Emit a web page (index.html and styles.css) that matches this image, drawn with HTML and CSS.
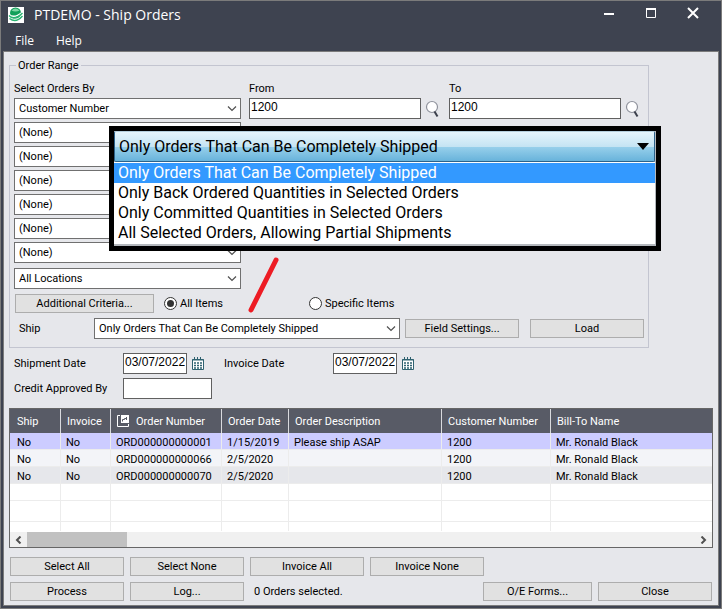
FILE: index.html
```html
<!DOCTYPE html>
<html lang="en">
<head>
    <meta charset="UTF-8">
    <meta name="viewport" content="width=device-width, initial-scale=1.0">
    <title>PTDEMO - Ship Orders</title>
    <link rel="stylesheet" href="styles.css">
</head>
<body>
    <div class="window">
        <header class="titlebar">
            <svg class="app-icon" width="16" height="16" viewBox="0 0 16 16">
                <rect width="16" height="16" fill="#fff"/>
                <circle cx="7.5" cy="6" r="5.5" fill="#12a05a"/>
                <path d="M3.5 3.5Q7.5 -.5 11.5 3.5Q7.5 5.5 3.5 3.5Z" fill="#7fd6a6"/>
                <path d="M1 7.5Q6 12 14 5.5" fill="none" stroke="#fff" stroke-width="1.4"/>
                <path d="M1 8.5Q6 14.5 14.5 6" fill="none" stroke="#2bb673" stroke-width="1.4"/>
                <path d="M1.5 11.5Q8 16.5 14.5 9" fill="none" stroke="#2bb673" stroke-width="1.4"/>
            </svg>
            <h1>PTDEMO - Ship Orders</h1>
            <div class="window-controls">
                <button type="button" aria-label="Minimize">
                    <svg width="12" height="12"><path d="M1 7H11" stroke="#fff" stroke-width="2"/></svg>
                </button>
                <button type="button" aria-label="Maximize">
                    <svg width="12" height="12"><path d="M1.5 1.5H10.5V10.5H1.5Z" fill="none" stroke="#fff"/><path d="M1 2H11" stroke="#fff" stroke-width="2"/></svg>
                </button>
                <button type="button" aria-label="Close window">
                    <svg width="12" height="12"><path d="M1 1L11 11M11 1L1 11" stroke="#fff" stroke-width="2"/></svg>
                </button>
            </div>
        </header>
        <nav class="menu">
            <a href="#">File</a>
            <a href="#">Help</a>
        </nav>

        <main class="content">
            <fieldset class="range">
                <legend>Order Range</legend>
                <div class="criteria">
                    <div class="select-col">
                        <label for="orderBy">Select Orders By</label>
                        <select id="orderBy"><option>Customer Number</option></select>
                        <select aria-label="Order by 2"><option>(None)</option></select>
                        <select aria-label="Order by 3"><option>(None)</option></select>
                        <select aria-label="Order by 4"><option>(None)</option></select>
                        <select aria-label="Order by 5"><option>(None)</option></select>
                        <select aria-label="Order by 6"><option>(None)</option></select>
                        <select aria-label="Order by 7"><option>(None)</option></select>
                        <select class="locations" aria-label="Locations"><option>All Locations</option></select>
                    </div>
                    <div class="value-col">
                        <label for="from">From</label>
                        <div class="finder">
                            <input type="text" id="from" value="1200">
                            <button type="button" class="icon-btn" aria-label="Find from">
                                <svg width="16" height="18" viewBox="0 0 16 18"><circle cx="7" cy="7" r="5.5" fill="#fff" stroke="#8f929c" stroke-width="1.2"/><path d="M9.5 11.5L12.5 16.5" stroke="#3c404c" stroke-width="2"/></svg>
                            </button>
                        </div>
                    </div>
                    <div class="value-col">
                        <label for="to">To</label>
                        <div class="finder">
                            <input type="text" id="to" value="1200">
                            <button type="button" class="icon-btn" aria-label="Find to">
                                <svg width="16" height="18" viewBox="0 0 16 18"><circle cx="7" cy="7" r="5.5" fill="#fff" stroke="#8f929c" stroke-width="1.2"/><path d="M9.5 11.5L12.5 16.5" stroke="#3c404c" stroke-width="2"/></svg>
                            </button>
                        </div>
                    </div>
                </div>
                <div class="items-row">
                    <button type="button" class="btn criteria-btn">Additional Criteria...</button>
                    <label class="radio"><input type="radio" name="items" checked>All Items</label>
                    <label class="radio"><input type="radio" name="items">Specific Items</label>
                </div>
                <div class="ship-row">
                    <label for="ship">Ship</label>
                    <select id="ship"><option>Only Orders That Can Be Completely Shipped</option></select>
                    <button type="button" class="btn">Field Settings...</button>
                    <button type="button" class="btn load-btn">Load</button>
                </div>

                <div class="callout">
                    <button type="button" class="callout-value">Only Orders That Can Be Completely Shipped
                        <svg width="12" height="7"><path d="M0 0H12L6 7Z" fill="#000"/></svg>
                    </button>
                    <ul>
                        <li class="active">Only Orders That Can Be Completely Shipped</li>
                        <li>Only Back Ordered Quantities in Selected Orders</li>
                        <li>Only Committed Quantities in Selected Orders</li>
                        <li>All Selected Orders, Allowing Partial Shipments</li>
                    </ul>
                </div>
                <svg class="pointer" width="32" height="56"><path d="M28 3L3 53" stroke="#ed1c24" stroke-width="5" stroke-linecap="round"/></svg>
            </fieldset>

            <div class="dates">
                <label for="shipDate">Shipment Date</label>
                <div class="date-field">
                    <input type="text" id="shipDate" value="03/07/2022">
                    <button type="button" class="icon-btn" aria-label="Pick shipment date">
                        <svg width="12" height="13" viewBox="0 0 12 13"><path d="M.5 2.5H11.5V12.5H.5Z" fill="#fff" stroke="#2f6270"/><path d="M0 3H12M2.5 0V3M5.5 0V3M8.5 0V3" stroke="#2f6270"/><path d="M2 6H10M2 8.5H10M2 11H10" stroke="#2f6270" stroke-width="1.5" stroke-dasharray="2 1"/></svg>
                    </button>
                </div>
                <label for="invoiceDate">Invoice Date</label>
                <div class="date-field">
                    <input type="text" id="invoiceDate" value="03/07/2022">
                    <button type="button" class="icon-btn" aria-label="Pick invoice date">
                        <svg width="12" height="13" viewBox="0 0 12 13"><path d="M.5 2.5H11.5V12.5H.5Z" fill="#fff" stroke="#2f6270"/><path d="M0 3H12M2.5 0V3M5.5 0V3M8.5 0V3" stroke="#2f6270"/><path d="M2 6H10M2 8.5H10M2 11H10" stroke="#2f6270" stroke-width="1.5" stroke-dasharray="2 1"/></svg>
                    </button>
                </div>
                <label for="approvedBy">Credit Approved By</label>
                <input type="text" id="approvedBy" class="approved">
            </div>

            <div class="grid">
                <table>
                    <colgroup>
                        <col class="c-ship"><col class="c-invoice"><col class="c-number"><col class="c-date"><col class="c-desc"><col class="c-customer"><col>
                    </colgroup>
                    <thead>
                        <tr>
                            <th>Ship</th>
                            <th>Invoice</th>
                            <th><svg width="12" height="12" viewBox="0 0 12 12"><path d="M3 .5H.5V11.5H11.5V9" fill="none" stroke="#fff"/><path d="M4 0H12V8H4Z" fill="#fff"/><path d="M5.5 6.5V4.5H7.5V3.5H9.5M9.5 2V5" fill="none" stroke="#585b66"/></svg>Order Number</th>
                            <th>Order Date</th>
                            <th>Order Description</th>
                            <th>Customer Number</th>
                            <th>Bill-To Name</th>
                        </tr>
                    </thead>
                    <tbody>
                        <tr class="selected"><td>No</td><td>No</td><td>ORD000000000001</td><td>1/15/2019</td><td>Please ship ASAP</td><td>1200</td><td>Mr. Ronald Black</td></tr>
                        <tr class="light"><td>No</td><td>No</td><td>ORD000000000066</td><td>2/5/2020</td><td></td><td>1200</td><td>Mr. Ronald Black</td></tr>
                        <tr class="shaded"><td>No</td><td>No</td><td>ORD000000000070</td><td>2/5/2020</td><td></td><td>1200</td><td>Mr. Ronald Black</td></tr>
                        <tr><td></td><td></td><td></td><td></td><td></td><td></td><td></td></tr>
                        <tr class="tall"><td></td><td></td><td></td><td></td><td></td><td></td><td></td></tr>
                        <tr class="short"><td></td><td></td><td></td><td></td><td></td><td></td><td></td></tr>
                    </tbody>
                </table>
                <div class="scrollbar">
                    <button type="button" aria-label="Scroll left"><svg width="7" height="8"><path d="M5.5 .5L2 4L5.5 7.5" fill="none" stroke="#505050" stroke-width="2"/></svg></button>
                    <div class="thumb"></div>
                    <button type="button" aria-label="Scroll right"><svg width="7" height="8"><path d="M1.5 .5L5 4L1.5 7.5" fill="none" stroke="#505050" stroke-width="2"/></svg></button>
                </div>
            </div>

            <div class="actions">
                <button type="button" class="btn">Select All</button>
                <button type="button" class="btn">Select None</button>
                <button type="button" class="btn">Invoice All</button>
                <button type="button" class="btn">Invoice None</button>
            </div>
            <div class="actions">
                <button type="button" class="btn">Process</button>
                <button type="button" class="btn">Log...</button>
                <span class="status">0 Orders selected.</span>
                <button type="button" class="btn forms-btn">O/E Forms...</button>
                <button type="button" class="btn">Close</button>
            </div>
        </main>
    </div>
</body>
</html>
```

FILE: styles.css
```css
* {
    box-sizing: border-box;
}
body {
    margin: 0;
    font-family: Roboto, "Liberation Sans", Arial, sans-serif;
    font-size: 11px;
    line-height: 13px;
    color: #000;
}
button, input, select {
    font: inherit;
    color: inherit;
    margin: 0;
}
svg {
    display: block;
    flex-shrink: 0;
}

/* window frame */
.window {
    display: flex;
    flex-direction: column;
    min-height: 100vh;
    padding: 0 2px 2px;
    border: 1px solid #7b7b7b;
    background-color: #3e4350;
}
.titlebar {
    display: flex;
    align-items: center;
    height: 28px;
    padding-left: 5px;
    color: #fff;
}
.titlebar h1 {
    margin: 0 0 0 10px;
    font-family: "Open Sans", "Noto Sans", sans-serif;
    font-size: 14px;
    font-weight: normal;
    line-height: 20px;
}
.window-controls {
    display: flex;
    margin-left: auto;
    padding-right: 5px;
}
.window-controls button {
    display: flex;
    align-items: center;
    justify-content: center;
    width: 42px;
    height: 24px;
    padding: 0 0 4px;
    border: none;
    background: none;
}
.menu {
    display: flex;
    gap: 22px;
    height: 22px;
    padding: 3px 12px;
    font-family: "Open Sans", "Noto Sans", sans-serif;
    font-size: 12px;
    line-height: 18px;
}
.menu a {
    color: #fff;
    text-decoration: none;
}
.content {
    flex: 1;
    padding: 7px 5px 4px;
    border: 1px solid #7b7b7b;
    background-color: #e6e7eb;
}

/* shared controls */
select {
    height: 21px;
    padding: 0 20px 0 4px;
    border: 1px solid #707070;
    border-radius: 0;
    appearance: none;
    background: #fff url("data:image/svg+xml,%3Csvg xmlns='http://www.w3.org/2000/svg' width='10' height='6'%3E%3Cpath d='M1 .5L5 4.5L9 .5' fill='none' stroke='%23505050' stroke-width='1.2'/%3E%3C/svg%3E") no-repeat right 3px center;
}
input[type="text"] {
    height: 21px;
    padding: 0 1px 4px;
    border: 1px solid #606060;
    background-color: #fff;
    font-family: "Liberation Sans", Arial, sans-serif;
    font-size: 12px;
}
.btn {
    width: 114px;
    height: 19px;
    padding: 0;
    border: 1px solid #adadad;
    background-color: #e1e1e1;
}
.icon-btn {
    padding: 0;
    border: none;
    background: none;
}

/* order range */
.range {
    position: relative;
    width: 640px;
    max-width: 100%;
    min-width: 0;
    margin: 0;
    padding: 10px 4px 8px;
    border: 1px solid #c3c5d0;
}
.range legend {
    margin-left: 2px;
    padding: 0 2px;
}
.criteria {
    display: flex;
    gap: 8px;
}
.select-col {
    display: flex;
    flex-direction: column;
    gap: 3px;
    width: 227px;
}
.select-col .locations {
    margin-top: 2px;
}
.value-col {
    display: flex;
    flex-direction: column;
    gap: 3px;
    width: 192px;
}
.finder {
    display: flex;
    align-items: center;
    gap: 4px;
}
.finder input {
    width: 172px;
}
.items-row {
    display: flex;
    align-items: center;
    margin-top: 5px;
    padding-left: 1px;
}
.criteria-btn {
    width: 139px;
}
.radio {
    display: flex;
    align-items: center;
    gap: 3px;
    width: 145px;
    padding-left: 10px;
}
.radio input {
    display: grid;
    place-items: center;
    width: 13px;
    height: 13px;
    border: 1px solid #333;
    border-radius: 50%;
    background-color: #fff;
    appearance: none;
}
.radio input:checked::after {
    content: "";
    width: 7px;
    height: 7px;
    border-radius: 50%;
    background-color: #333;
}
.ship-row {
    display: flex;
    align-items: center;
    margin-top: 5px;
}
.ship-row label {
    width: 80px;
    padding-left: 5px;
}
.ship-row select {
    flex: 1;
    min-width: 0;
    margin-right: 5px;
}
.load-btn {
    margin-left: 11px;
}

/* enlarged drop-down laid over the form */
.callout {
    position: absolute;
    top: 54px;
    left: 99px;
    width: 552px;
    padding: 0 1px 2px 0;
    border: 5px solid #000;
    background-color: #b4b8bd;
    font-size: 16px;
    line-height: 20px;
}
.callout-value {
    display: flex;
    align-items: center;
    justify-content: space-between;
    width: 100%;
    height: 31px;
    padding: 0 5px 0 4px;
    border: 1px solid #2c628b;
    border-top-color: #b5cfdd;
    border-radius: 2px;
    background: linear-gradient(#e6f5fc, #c5e4f3 50%, #98d0eb 51%, #68b3db);
}
.callout ul {
    margin: 0;
    padding: 1px 0;
    list-style: none;
    background-color: #fff;
}
.callout li {
    height: 20px;
    padding-left: 4px;
}
.callout .active {
    background-color: #3399ff;
    color: #fff;
}
.pointer {
    position: absolute;
    top: 185px;
    left: 238px;
}

/* dates */
.dates {
    display: grid;
    grid-template-columns: 109px 101px 109px 101px;
    align-items: center;
    row-gap: 4px;
    margin-top: 5px;
    padding-left: 5px;
}
.date-field {
    display: flex;
    align-items: center;
    gap: 5px;
}
.date-field input {
    width: 64px;
}
.approved {
    width: 89px;
}

/* orders table */
.grid {
    margin-top: 9px;
    border: 1px solid #666;
    background-color: #fff;
}
table {
    width: 100%;
    border-collapse: separate;
    border-spacing: 0;
    table-layout: fixed;
}
.c-ship { width: 51px; }
.c-invoice { width: 50px; }
.c-number { width: 111px; }
.c-date { width: 67px; }
.c-desc { width: 153px; }
.c-customer { width: 109px; }
th {
    height: 24px;
    padding: 0 0 0 6px;
    border-right: 1px solid #d9dade;
    background-color: #585b66;
    color: #fff;
    font-weight: normal;
    text-align: left;
    white-space: nowrap;
}
th svg {
    display: inline-block;
    margin-right: 7px;
    vertical-align: -2px;
}
td {
    height: 17px;
    padding: 3px 0 0 5px;
    border-right: 1px solid #ececec;
    border-bottom: 1px solid #ececec;
    white-space: nowrap;
}
th:first-child, td:first-child {
    padding-left: 7px;
}
th:last-child, td:last-child {
    border-right: none;
}
.selected td {
    background-color: #ccccff;
}
.light td {
    background-color: #f3f4f8;
}
.shaded td {
    background-color: #e6e7eb;
}
.tall td {
    height: 21px;
}
.short td {
    height: 9px;
    border-bottom: none;
}
.scrollbar {
    display: flex;
    height: 15px;
    margin-top: 1px;
    background-color: #f0f0f0;
}
.scrollbar button {
    display: flex;
    align-items: center;
    justify-content: center;
    width: 17px;
    padding: 0;
    border: none;
    background: none;
}
.scrollbar .thumb {
    width: 100px;
    margin-right: auto;
    background-color: #c1c1c1;
}

/* bottom buttons */
.actions {
    display: flex;
    align-items: center;
    gap: 6px;
    margin-top: 6px;
    padding: 0 1px;
}
.grid + .actions {
    margin-top: 9px;
}
.status {
    margin-right: auto;
    padding-left: 4px;
}
.forms-btn {
    width: 109px;
}
```
